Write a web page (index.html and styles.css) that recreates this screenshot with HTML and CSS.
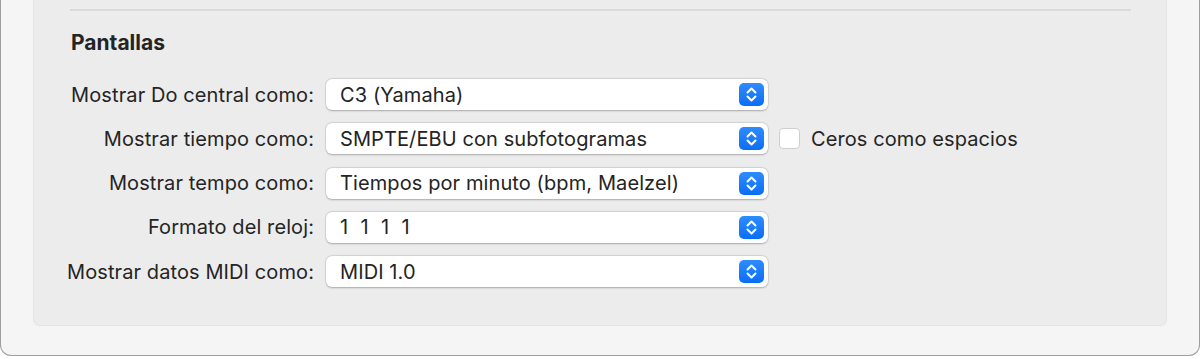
FILE: index.html
```html
<!DOCTYPE html>
<html lang="es">
<head>
    <meta charset="UTF-8">
    <title>Pantallas</title>
    <link rel="stylesheet" href="styles.css">
</head>
<body>
    <div class="window">
        <div class="panel">
            <div class="separator"></div>
            <h2>Pantallas</h2>
            <div class="rows">
                <label class="row-label">Mostrar Do central como:</label>
                <div class="popup"><span>C3 (Yamaha)</span><span class="stepper"></span></div>
                <div></div>

                <label class="row-label">Mostrar tiempo como:</label>
                <div class="popup"><span>SMPTE/EBU con subfotogramas</span><span class="stepper"></span></div>
                <label class="check"><span class="box"></span>Ceros como espacios</label>

                <label class="row-label">Mostrar tempo como:</label>
                <div class="popup"><span>Tiempos por minuto (bpm, Maelzel)</span><span class="stepper"></span></div>
                <div></div>

                <label class="row-label">Formato del reloj:</label>
                <div class="popup"><span class="spaced">1 1 1 1</span><span class="stepper"></span></div>
                <div></div>

                <label class="row-label">Mostrar datos MIDI como:</label>
                <div class="popup"><span>MIDI 1.0</span><span class="stepper"></span></div>
                <div></div>
            </div>
        </div>
    </div>
</body>
</html>
```

FILE: styles.css
```css
body {
    margin: 0;
    padding: 0;
    background-color: #ffffff;
    font-family: Inter, "Noto Sans", sans-serif;
    color: #242424;
}
.window {
    width: 1200px;
    height: 356px;
    background-color: #f5f5f5;
    border: 1px solid #9e9e9e;
    border-top: none;
    border-radius: 0 0 11px 11px;
    padding: 0 32px;
    box-sizing: border-box;
}
.panel {
    height: 326px;
    background-color: #ececec;
    border: 1px solid #e3e3e3;
    border-top: none;
    border-radius: 0 0 7px 7px;
    padding: 9px 35px 0 36px;
    box-sizing: border-box;
}
.separator {
    height: 2px;
    background-color: #dadada;
}
h2 {
    font-size: 21px;
    font-weight: 700;
    line-height: 24px;
    margin: 20px 0 0 1px;
}
.rows {
    display: grid;
    grid-template-columns: 244px 442px auto;
    column-gap: 12px;
    row-gap: 13.25px;
    margin-top: 24px;
    align-items: center;
}
.row-label {
    justify-self: end;
    white-space: nowrap;
    font-size: 20px;
    letter-spacing: 0.1px;
}
.popup {
    height: 31px;
    background-color: #fff;
    border-radius: 6px;
    box-shadow: 0 0.5px 2px rgba(0, 0, 0, 0.25), 0 0 0 0.5px rgba(0, 0, 0, 0.08);
    display: flex;
    align-items: center;
    justify-content: space-between;
    padding: 0 4px 0 14px;
    font-size: 20px;
    letter-spacing: 0.1px;
}
.spaced {
    word-spacing: 6.5px;
}
.stepper {
    width: 25px;
    height: 23px;
    border-radius: 5px;
    background-image: url("data:image/svg+xml,%3Csvg xmlns='http://www.w3.org/2000/svg' width='25' height='23'%3E%3Cpath d='M8.5 9.5 L12.5 5.5 L16.5 9.5 M8.5 13.5 L12.5 17.5 L16.5 13.5' fill='none' stroke='white' stroke-width='2' stroke-linecap='round' stroke-linejoin='round'/%3E%3C/svg%3E"), linear-gradient(#2f8cff, #0a6ef5);
}
.check {
    display: flex;
    align-items: center;
    gap: 11px;
    margin-left: -1px;
    font-size: 20px;
    letter-spacing: 0.1px;
    white-space: nowrap;
}
.box {
    width: 19px;
    height: 19px;
    background-color: #fff;
    border: 1px solid #cfcfcf;
    border-radius: 4px;
}
```
